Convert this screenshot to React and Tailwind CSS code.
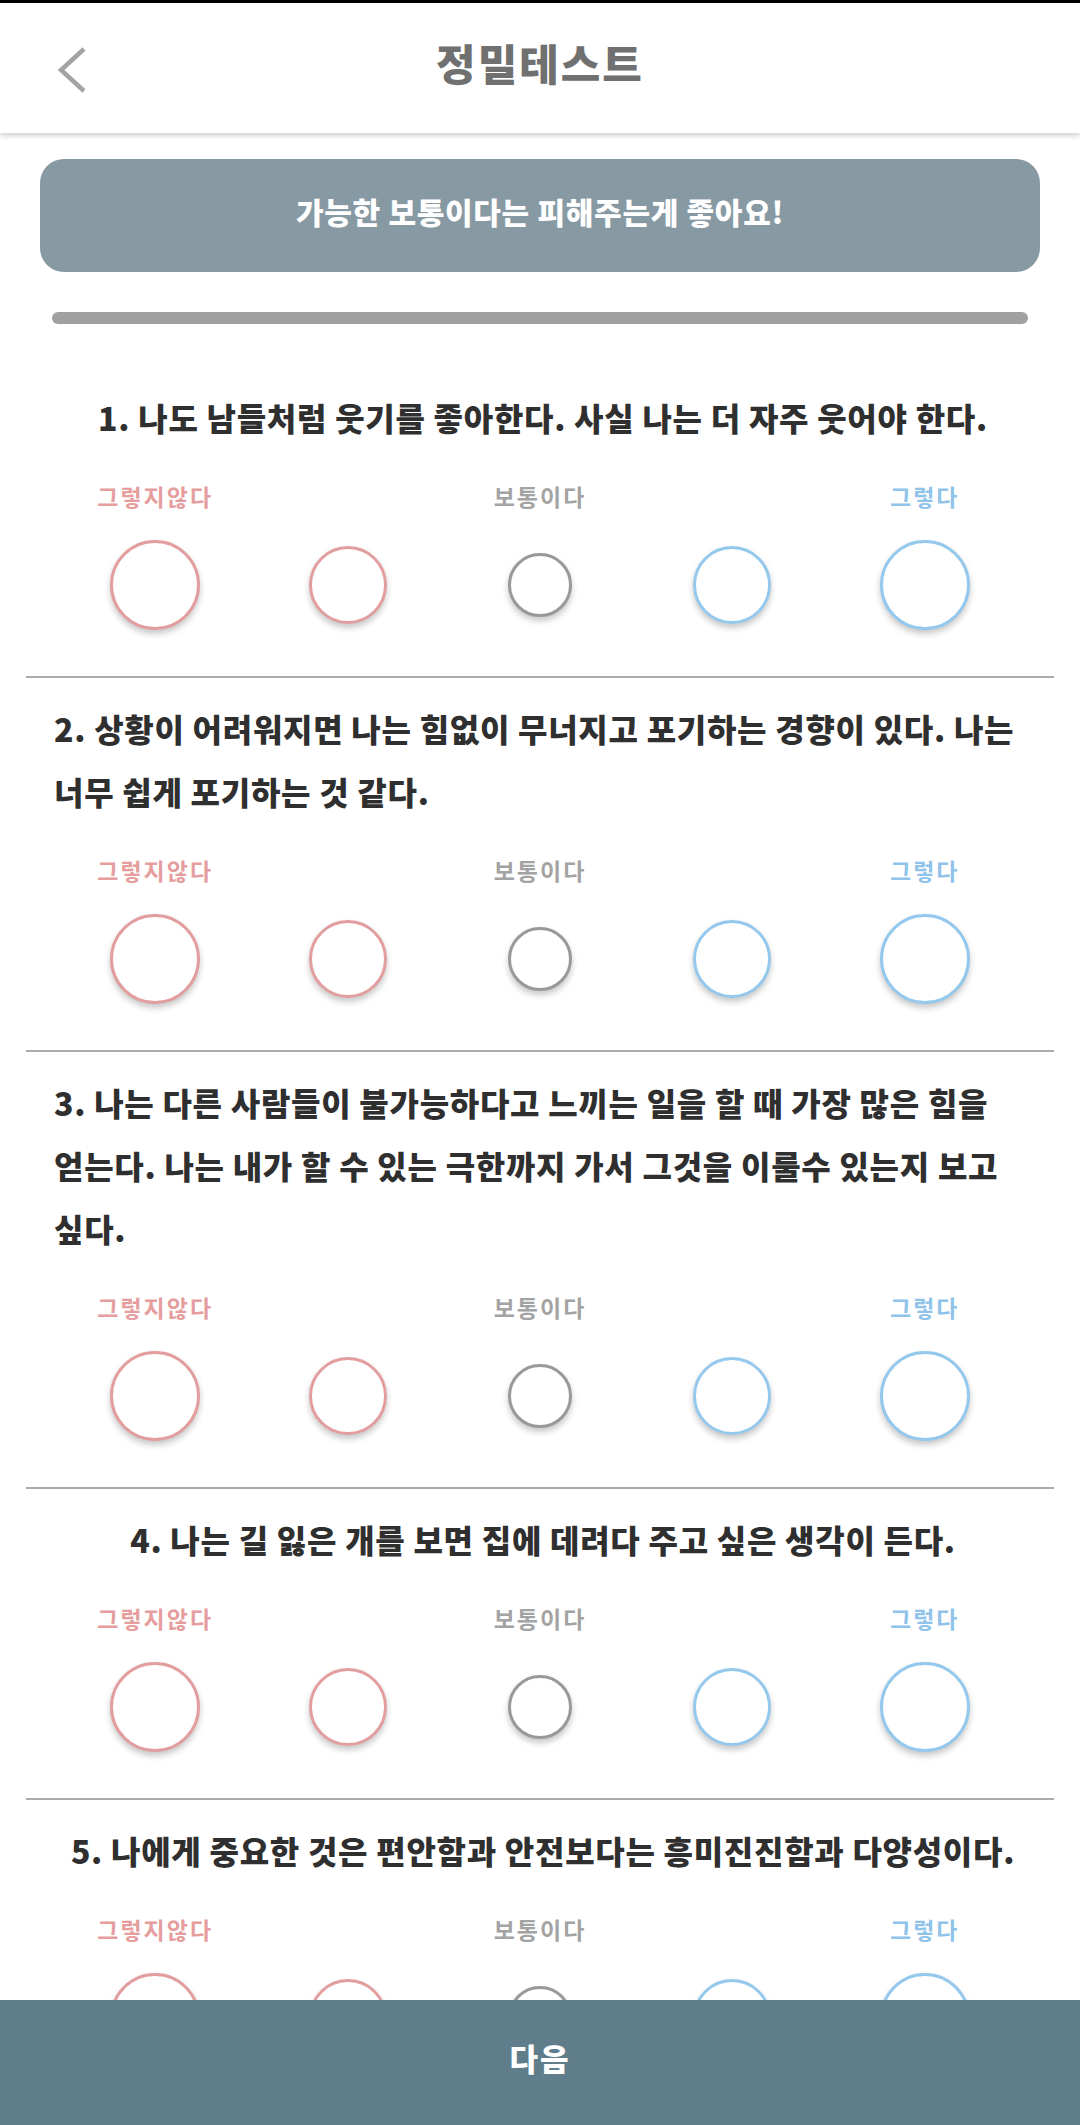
const questions = [
  '1. 나도 남들처럼 웃기를 좋아한다. 사실 나는 더 자주 웃어야 한다.',
  '2. 상황이 어려워지면 나는 힘없이 무너지고 포기하는 경향이 있다. 나는 너무 쉽게 포기하는 것 같다.',
  '3. 나는 다른 사람들이 불가능하다고 느끼는 일을 할 때 가장 많은 힘을 얻는다. 나는 내가 할 수 있는 극한까지 가서 그것을 이룰수 있는지 보고 싶다.',
  '4. 나는 길 잃은 개를 보면 집에 데려다 주고 싶은 생각이 든다.',
  '5. 나에게 중요한 것은 편안함과 안전보다는 흥미진진함과 다양성이다.',
]

const choices = [
  { size: 'w-[90px] h-[90px]', ring: 'border-[#e29e9e]' },
  { size: 'w-[78px] h-[78px]', ring: 'border-[#e29e9e]' },
  { size: 'w-[64px] h-[64px]', ring: 'border-[#999999]' },
  { size: 'w-[78px] h-[78px]', ring: 'border-[#94c8ec]' },
  { size: 'w-[90px] h-[90px]', ring: 'border-[#94c8ec]' },
]

function BackIcon() {
  return (
    <svg width="30" height="46" viewBox="0 0 30 46" fill="none">
      <polyline points="26,2 3,23 26,44" stroke="#a3a3a3" strokeWidth="4.5" />
    </svg>
  )
}

function Question({ text }) {
  return (
    <section className="mx-[26px] pt-[19px] pb-[46px] border-b-2 border-[#aaaaaa]">
      <div className="pl-[28px] pr-[22px] text-center">
        <p className="inline-block text-left break-keep text-[32px] leading-[63px] tracking-[0.7px] font-extrabold text-[#2f2f2f]">
          {text}
        </p>
      </div>

      <div className="mt-[32px] mx-[33px] grid grid-cols-5 text-[23px] leading-[30px] tracking-[2px] font-bold">
        <span className="text-center text-[#e59d9d]">그렇지않다</span>
        <span />
        <span className="text-center text-[#a3a3a3]">보통이다</span>
        <span />
        <span className="text-center text-[#8fc3ea]">그렇다</span>
      </div>

      <div className="mt-[29px] mx-[33px] h-[90px] grid grid-cols-5 items-center justify-items-center">
        {choices.map((c, i) => (
          <button
            key={i}
            className={`${c.size} ${c.ring} rounded-full border-[3px] bg-white shadow-[0_4px_6px_rgba(0,0,0,0.22)]`}
          />
        ))}
      </div>
    </section>
  )
}

export default function App() {
  return (
    <div className="min-h-screen bg-white pb-[125px] font-['Noto_Sans_CJK_KR','Noto_Sans',sans-serif]">
      <div className="h-[3px] bg-black" />
      <header className="relative h-[130px] flex items-center justify-center bg-white shadow-[0_3px_5px_rgba(0,0,0,0.18)]">
        <button className="absolute left-[58px] top-[44px]">
          <BackIcon />
        </button>
        <h1 className="pb-[12px] text-[43px] tracking-[2px] font-extrabold text-[#707070]">정밀테스트</h1>
      </header>

      <main>
        <div className="mt-[26px] mx-[40px] h-[113px] rounded-[24px] bg-[#879aa4] flex items-center justify-center pb-[8px]">
          <p className="text-[30px] tracking-[0.7px] font-extrabold text-white">가능한 보통이다는 피해주는게 좋아요!</p>
        </div>

        <div className="mt-[40px] mb-[43px] mx-[52px] h-[12px] rounded-full bg-[#a0a0a0]" />

        {questions.map((q) => (
          <Question key={q} text={q} />
        ))}
      </main>

      <button className="fixed bottom-0 left-0 right-0 h-[125px] bg-[#5f7d8b] flex items-center justify-center pb-[8px] text-[31px] tracking-[2px] font-extrabold text-white">
        다음
      </button>
    </div>
  )
}
